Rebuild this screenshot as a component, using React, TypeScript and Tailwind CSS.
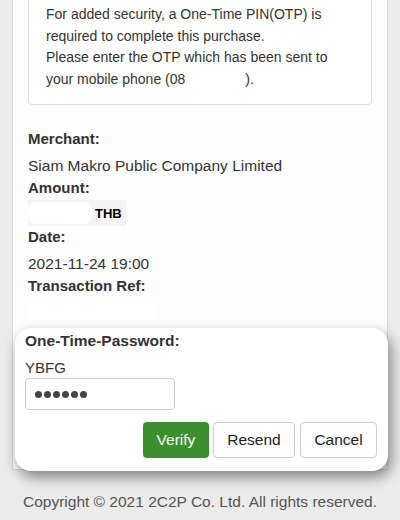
import React from 'react';

// --- DATA ---
const DETAILS = {
  merchant: 'Siam Makro Public Company Limited',
  date: '2021-11-24 19:00',
};

export default function App() {
  return (
    <div className="h-[520px] w-[400px] overflow-hidden bg-[#ebebeb] font-['Liberation_Sans',Arial,sans-serif] text-[15px] text-[#333]">
      {/* Main Panel */}
      <div className="mx-[12px] mt-[-40px] border border-[#d9d9d9] bg-[#fdfdfd] px-[15px] pt-[16px]">
        {/* Notice Box */}
        <div className="rounded-[4px] border border-[#dcdcdc] bg-white pl-[17px] pr-[10px] pt-[26px] pb-[14px] text-[14px] leading-[21.5px]">
          For added security, a One-Time PIN(OTP) is
          <br />
          required to complete this purchase.
          <br />
          Please enter the OTP which has been sent to
          <br />
          your mobile phone (08<span className="inline-block w-[60px]" />).
        </div>

        {/* Details */}
        <div className="mt-[23px] leading-[21px]">
          <div className="mb-[6px] font-bold">Merchant:</div>
          <div className="mb-[1px] text-[15.5px]">{DETAILS.merchant}</div>
          <div className="mb-[2px] font-bold">Amount:</div>
          <div className="flex h-[26px] w-[98px] items-center bg-[#f4f4f6]">
            <div className="h-[22px] w-[64px] rounded-[8px] bg-white" />
            <span className="ml-[3px] text-[13px] font-bold text-black">THB</span>
          </div>
          <div className="mb-[6px] font-bold">Date:</div>
          <div className="mb-[1px] text-[15.5px]">{DETAILS.date}</div>
          <div className="font-bold">Transaction Ref:</div>
          <div className="mt-[8px] h-[16px] w-[130px] rounded-[8px] bg-white" />
        </div>

        {/* OTP Popup */}
        <div className="relative z-10 mt-[8px] mb-[-2px] ml-[-13px] mr-[-16px] rounded-[16px] bg-white px-[10px] pt-[2px] pb-[13px] pr-[11px] shadow-[3px_6px_14px_rgba(0,0,0,0.45)]">
          <div className="mb-[6px] text-[15.5px] font-bold leading-[21px]">One-Time-Password:</div>
          <div className="leading-[21px]">YBFG</div>
          <div className="flex h-[32px] w-[150px] items-center gap-[2px] rounded-[4px] border border-[#cfcfcf] bg-white pl-[9px]">
            {[0, 1, 2, 3, 4, 5].map(i => (
              <span key={i} className="h-[7px] w-[7px] rounded-full bg-[#444]" />
            ))}
          </div>
          <div className="mt-[12px] flex justify-end gap-[4px]">
            <button className="h-[36px] w-[66px] rounded-[4px] bg-[#3c8f2e] text-[15.5px] text-white">Verify</button>
            <button className="h-[36px] w-[82px] rounded-[4px] border border-[#cfcfcf] bg-white text-[15.5px] text-[#222]">Resend</button>
            <button className="ml-[1px] h-[36px] w-[77px] rounded-[4px] border border-[#cfcfcf] bg-white text-[15.5px] text-[#222]">Cancel</button>
          </div>
        </div>
      </div>

      {/* Footer */}
      <div className="mt-[21px] text-center text-[15.5px] leading-[21px] text-[#555]">
        Copyright © 2021 2C2P Co. Ltd. All rights reserved.
      </div>
    </div>
  );
}
